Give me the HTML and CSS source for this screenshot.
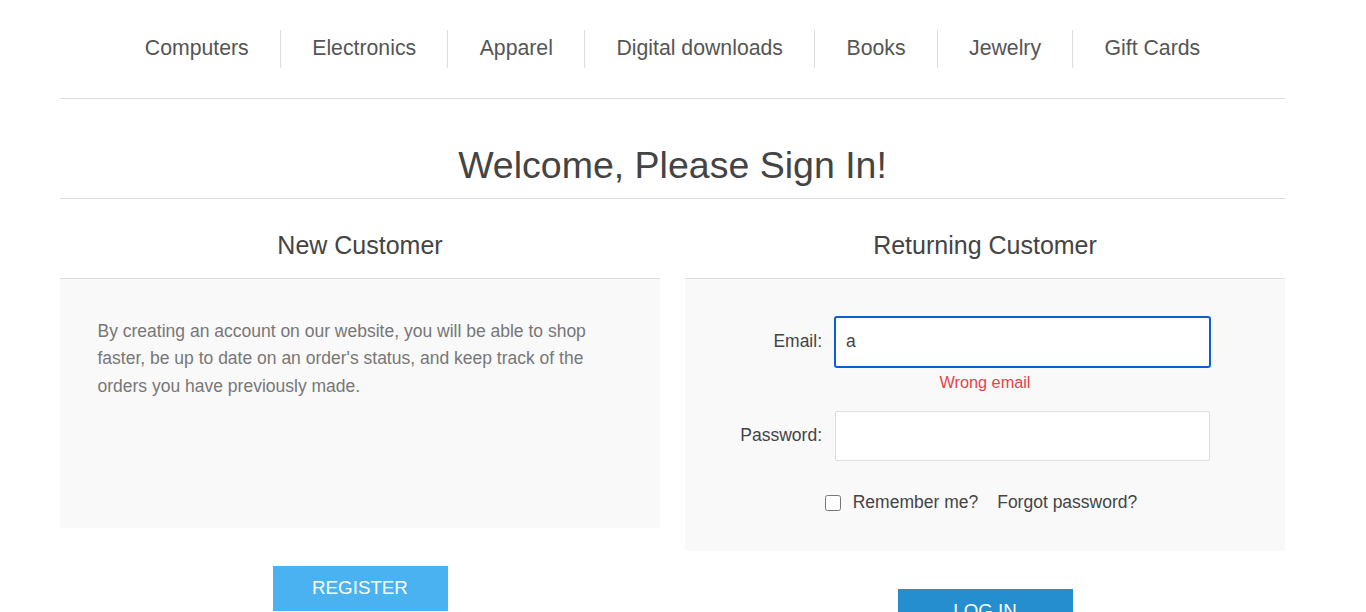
FILE: index.html
```html
<!DOCTYPE html>
<html lang="en">
<head>
<meta charset="utf-8">
<title>Login</title>
<link rel="stylesheet" href="styles.css">
</head>
<body>
<div class="page">
  <nav class="menu">
    <ul class="menu-list">
      <li><a href="#">Computers</a></li>
      <li><a href="#">Electronics</a></li>
      <li><a href="#">Apparel</a></li>
      <li><a href="#">Digital downloads</a></li>
      <li><a href="#">Books</a></li>
      <li><a href="#">Jewelry</a></li>
      <li><a href="#">Gift Cards</a></li>
    </ul>
  </nav>
  <h1 class="page-title">Welcome, Please Sign In!</h1>
  <div class="columns">
    <section class="col">
      <h2 class="title">New Customer</h2>
      <div class="box new-box">
        By creating an account on our website, you will be able to shop faster, be up to date on an order's status, and keep track of the orders you have previously made.
      </div>
      <div class="btn-row"><button class="btn register">REGISTER</button></div>
    </section>
    <section class="col">
      <h2 class="title">Returning Customer</h2>
      <form class="box login-box">
        <div class="field">
          <div class="field-row">
            <label class="lbl" for="email">Email:</label>
            <input id="email" class="inp focused" type="text" value="a">
          </div>
          <span class="error">Wrong email</span>
        </div>
        <div class="field">
          <div class="field-row">
            <label class="lbl" for="pw">Password:</label>
            <input id="pw" class="inp" type="password">
          </div>
        </div>
        <div class="remember">
          <input type="checkbox" class="chk" id="rm">
          <label for="rm" class="rm-label">Remember me?</label>
          <a href="#" class="forgot">Forgot password?</a>
        </div>
      </form>
      <div class="btn-row"><button class="btn login">LOG IN</button></div>
    </section>
  </div>
</div>
</body>
</html>
```
FILE: styles.css
```css
* { box-sizing: border-box; }
html, body { margin: 0; padding: 0; background: #fff; overflow: hidden; }
body { font-family: "Liberation Sans", Arial, sans-serif; color: #777; }
.page { width: 1225px; margin-left: 60px; }

.menu { border-bottom: 1px solid #ddd; padding: 30px 0 30px; }
.menu-list { list-style: none; margin: 0; padding: 0; display: flex; justify-content: center; }
.menu-list li { height: 37.5px; display: flex; align-items: center; }
.menu-list li + li { border-left: 1px solid #ddd; }
.menu-list a { display: block; padding: 0 31.25px; font-size: 21.25px; line-height: 37.5px; color: #555; text-decoration: none; }

.page-title { margin: 0; padding: 44px 0 10px; font-size: 37.5px; line-height: 45px; font-weight: normal; color: #444; text-align: center; border-bottom: 1px solid #ddd; }

.columns { display: flex; gap: 25px; }
.col { flex: 0 0 600px; }
.title { margin: 0; padding: 31px 0 18px; font-size: 25px; line-height: 30px; font-weight: normal; color: #444; text-align: center; border-bottom: 1px solid #ddd; }
.box { background: #f9f9f9; }
.new-box { min-height: 249px; padding: 39px 37.5px 37.5px; font-size: 17.5px; line-height: 27.5px; color: #777; }

.login-box { padding: 38px 0 37px; }
.field { margin-bottom: 19px; }
.field-row { display: flex; align-items: center; }
.lbl { flex: 0 0 137px; margin-right: 13px; text-align: right; font-size: 17.5px; color: #444; }
.inp { width: 375px; height: 50px; border: 1px solid #ddd; border-radius: 2px; background: #fff; padding: 0 10px; font-family: "Liberation Sans", Arial, sans-serif; font-size: 17.5px; color: #444; outline: none; margin: 0; }
.inp.focused { border-color: #0a60d2; box-shadow: 0 0 0 1px #0a60d2; }
.error { display: block; margin-top: 6px; font-size: 16.25px; line-height: 19px; color: #e4434b; text-align: center; }

.remember { display: flex; align-items: center; justify-content: center; height: 22px; margin-top: 31px; padding-right: 8px; font-size: 17.5px; color: #444; }
.chk { width: 16px; height: 16px; margin: 0 12px 0 0; }
.rm-label { margin-right: 19px; }
.forgot { color: #444; text-decoration: none; }

.btn-row { display: flex; justify-content: center; margin-top: 38px; }
.btn { width: 175px; height: 45px; border: none; color: #fff; font-family: "Liberation Sans", Arial, sans-serif; font-size: 18.75px; text-transform: uppercase; cursor: pointer; }
.register { background: #4ab2f1; }
.login { background: #248ece; }
```
